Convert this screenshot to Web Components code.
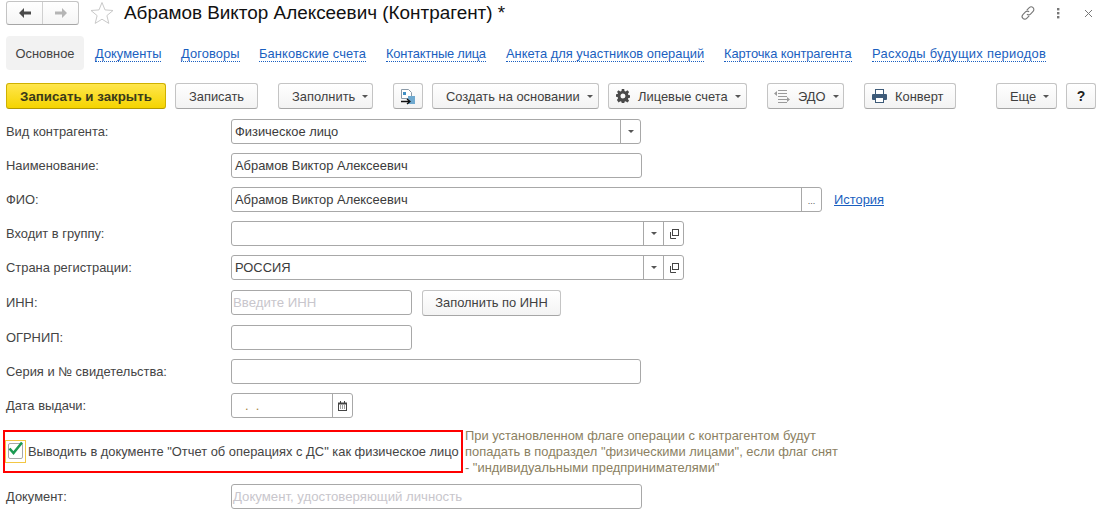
<!DOCTYPE html>
<html lang="ru">
<head>
<meta charset="utf-8">
<title>Контрагент</title>
<style>
  html, body { margin: 0; background: #fff; }
  body { font: 13px "Liberation Sans", Arial, sans-serif; color: #3b3b3b; width: 1112px; height: 515px; overflow: hidden; }
</style>
</head>
<body>
<contractor-form></contractor-form>

<script>
const ICONS = {
  back: `<svg width="14" height="12" viewBox="0 0 14 12"><path d="M6 1 1 6l5 5V7.500h7v-3H6z" fill="#4a4a4a"/></svg>`,
  forward: `<svg width="14" height="12" viewBox="0 0 14 12"><path d="M8 1l5 5-5 5V7.500H1v-3h7z" fill="#b5b5b5"/></svg>`,
  star: `<svg width="24" height="24" viewBox="0 0 24 24"><path d="M12 1.500l3 7.400 8 .6-6.100 5.100 1.900 7.800L12 18.200l-6.800 4.200 1.900-7.800L1 9.500l8-.6z" fill="#fff" stroke="#c9c9c9"/></svg>`,
  link: `<svg width="16" height="16" viewBox="0 0 16 16" fill="none" stroke="#777" stroke-width="1.100"><path d="M6.800 5.200 9.300 2.700a2.500 2.500 0 0 1 3.800 3.700l-2.600 2.700a2.500 2.500 0 0 1-3.600 0"/><path d="M9.200 10.800l-2.500 2.500a2.500 2.500 0 0 1-3.800-3.700l2.600-2.700a2.500 2.500 0 0 1 3.600 0"/></svg>`,
  dots: `<svg width="4" height="12" viewBox="0 0 4 12"><g fill="#777"><rect x="1" y="1" width="2.400" height="2.400"/><rect x="1" y="5" width="2.400" height="2.400"/><rect x="1" y="9" width="2.400" height="2.400"/></g></svg>`,
  close: `<svg width="9" height="9" viewBox="0 0 9 9"><path d="M1 1l7 7M8 1L1 8" stroke="#777" fill="none"/></svg>`,
  docgo: `<svg width="17" height="17" viewBox="0 0 17 17"><path d="M2.500 1.500h7l3 3v6h-10z" fill="#fff" stroke="#8a9aa8"/><rect x="4" y="4" width="3" height="3" fill="#3f8fc4"/><rect x="9" y="8" width="7" height="8" fill="#6fa9cf"/><path d="M2 13.500h8M8 11l3 2.500L8 16" stroke="#111" stroke-width="1.300" fill="none"/></svg>`,
  gear: `<svg width="14" height="14" viewBox="0 0 14 14"><path fill="#4a4a4a" fill-rule="evenodd" d="M5.800 0h2.400l.3 2 1.200.5L11.400 1.300l1.700 1.700-1.200 1.700.5 1.200 2 .3v2.400l-2 .3-.5 1.200 1.200 1.700-1.700 1.700-1.700-1.200-1.200.5-.3 2H5.800l-.3-2-1.200-.5-1.700 1.200L.9 11l1.200-1.700-.5-1.200-2-.3V5.400l2-.3.5-1.200L.9 3l1.700-1.700 1.700 1.200 1.200-.5zM7 4.500a2.500 2.500 0 1 0 0 5 2.500 2.500 0 0 0 0-5z"/></svg>`,
  edo: `<svg width="16" height="15" viewBox="0 0 16 15" fill="none" stroke="#9a9a9a"><path d="M4 1.500h9M4 4.500h9M4 7.500h9M4 10.500h9M4 13.500h9"/><path d="M0 4.500l3-2.500v5zM16 10.500l-3-2.500v5z" fill="#9a9a9a" stroke="none"/></svg>`,
  printer: `<svg width="15" height="14" viewBox="0 0 15 14"><rect x="3.500" y=".5" width="8" height="5" fill="#fff" stroke="#3d5a78"/><rect x="0" y="5" width="15" height="6" rx="1" fill="#3d5a78"/><rect x="3.500" y="8.500" width="8" height="5" fill="#fff" stroke="#3d5a78"/></svg>`,
  calendar: `<svg width="9" height="10" viewBox="0 0 9 10"><path d="M0 1.500h9V10H0z" fill="#444"/><rect x="1" y="3.500" width="7" height="5.500" fill="#fff"/><rect x="2" y="0" width="1" height="2" fill="#444"/><rect x="6" y="0" width="1" height="2" fill="#444"/><g fill="#444"><rect x="2" y="4.500" width="1" height="1"/><rect x="4" y="4.500" width="1" height="1"/><rect x="6" y="4.500" width="1" height="1"/><rect x="2" y="6.500" width="1" height="1"/><rect x="4" y="6.500" width="1" height="1"/><rect x="6" y="6.500" width="1" height="1"/></g></svg>`,
  open: `<svg width="10" height="10" viewBox="0 0 10 10" fill="none" stroke="#444"><rect x="3.500" y=".5" width="6" height="6"/><path d="M1.500 3v6.500H7" /></svg>`,
  check: `<svg width="17" height="15" viewBox="0 0 17 15"><path d="M2.500 7.500l4 4.500L15 1.500" fill="none" stroke="#1c9a52" stroke-width="2.600"/></svg>`
};

class TbButton extends HTMLElement {
  constructor() {
    super()
    const arrow = this.hasAttribute('arrow') ? `<i></i>` : '';
    const icon = this.getAttribute('icon');
    this.attachShadow({ mode: 'open' })
    this.shadowRoot.innerHTML = `
      <style>
        :host {
          display: flex;
          box-sizing: border-box;
          align-items: center;
          justify-content: center;
          gap: 7px;
          height: 26px;
          flex: none;
          border: 1px solid #c4c4c4;
          border-bottom-color: #a6a6a6;
          border-radius: 3px;
          background: linear-gradient(#fff, #f3f3f3);
          color: #3f3f3f;
          font-size: 12.900px;
          white-space: nowrap;
        }
        :host([pad]) { justify-content: flex-start; }
        :host([primary]) {
          background: linear-gradient(#ffe64d, #f5d400);
          border-color: #cfb100;
          border-bottom-color: #b39900;
          font-weight: bold;
          font-size: 13.300px;
          color: #3a3a1a;
        }
        svg { display: block; margin-right: 1px; }
        i { display: block; width: 0; height: 0; border: 3px solid transparent; border-top: 3px solid #555; border-bottom: 0; }
      </style>
      ${icon ? ICONS[icon] : ''}<slot></slot>${arrow}`
    if (this.hasAttribute('pad')) this.style.paddingLeft = this.getAttribute('pad') + 'px';
  }
}

class TextField extends HTMLElement {
  constructor() {
    super()
    const parts = (this.getAttribute('parts') || '').split(' ').filter(Boolean);
    const side = parts.map(p => `<b>${{
      drop: '<i></i>',
      open: ICONS.open,
      dots: '<span>...</span>',
      cal: ICONS.calendar
    }[p]}</b>`).join('');
    const value = this.getAttribute('value') || '';
    const hint = this.getAttribute('hint') || '';
    this.attachShadow({ mode: 'open' })
    this.shadowRoot.innerHTML = `
      <style>
        :host {
          display: flex;
          box-sizing: border-box;
          height: 25px;
          flex: none;
          border: 1px solid #a8a8a8;
          border-radius: 3px;
          background: #fff;
          font-size: 12.900px;
          color: #3b3b3b;
        }
        div { flex: 1; padding-left: 3px; line-height: 24px; white-space: nowrap; overflow: hidden; }
        div.hint { color: #c8c6cc; padding-left: 1px; font-size: 13.200px; }
        div.date { color: #a8823c; padding-left: 13px; }
        b { display: flex; width: 20px; box-sizing: border-box; border-left: 1px solid #a8a8a8; align-items: center; justify-content: center; font-weight: normal; }
        b span { font-size: 9px; color: #555; margin-top: 2px; }
        i { width: 0; height: 0; border: 3px solid transparent; border-top: 3px solid #555; border-bottom: 0; }
        svg { display: block; }
      </style>
      <div class="${hint ? 'hint' : ''} ${this.hasAttribute('date') ? 'date' : ''}">${value || hint}<slot></slot></div>${side}`
  }
}

class FormRow extends HTMLElement {
  constructor() {
    super()
    this.attachShadow({ mode: 'open' })
    this.shadowRoot.innerHTML = `
      <style>
        :host { display: flex; align-items: center; height: 25px; }
        label { width: 225px; flex: none; font-size: 12.900px; color: #444; }
        .rest { display: flex; align-items: center; gap: 10px; }
      </style>
      <label>${this.getAttribute('label')}</label>
      <div class="rest"><slot></slot></div>`
  }
}

class CheckRow extends HTMLElement {
  constructor() {
    super()
    this.attachShadow({ mode: 'open' })
    this.shadowRoot.innerHTML = `
      <style>
        :host { display: flex; align-items: stretch; height: 43px; margin-left: -3px; }
        .mark {
          display: flex; align-items: center; box-sizing: border-box; width: 460px; height: 43px; flex: none;
          border: 2px solid #f00; padding-left: 0; gap: 2px;
          font-size: 12.900px; color: #444; white-space: nowrap;
        }
        .box { display: block; position: relative; box-sizing: border-box; width: 21px; height: 23px; border: 1px solid #f3c744; padding: 2px 1px; }
        .box span { display: block; box-sizing: border-box; width: 15px; height: 16px; margin-left: 1px; border: 1px solid #a8a8a8; border-radius: 2px; }
        .box svg { position: absolute; left: 1px; top: 0; }
        .help { margin-left: 2px; font-size: 12.900px; line-height: 16px; color: #8b7f62; white-space: nowrap; margin-top: -2px; }
      </style>
      <div class="mark">
        <span class="box"><span></span>${ICONS.check}</span>
        <slot></slot>
      </div>
      <div class="help"><slot name="help"></slot></div>`
  }
}

class ContractorForm extends HTMLElement {
  constructor() {
    super()
    // text, gap before, width, letter spacing: the widths are read off the reference
    const tabs = [
      ['Документы', 11, 66, 0], ['Договоры', 20, 59, .1], ['Банковские счета', 19, 107, .12], ['Контактные лица', 20, 100, -.2],
      ['Анкета для участников операций', 20, 198, 0], ['Карточка контрагента', 20, 128, -.1], ['Расходы будущих периодов', 20, 174, .29]
    ];
    this.attachShadow({ mode: 'open' })
    this.shadowRoot.innerHTML = `
      <style>
        :host { display: block; padding: 1px 0 0 6px; }
        .head { display: flex; align-items: center; height: 24px; }
        .nav { display: flex; box-sizing: border-box; width: 73px; height: 24px; border: 1px solid #c4c4c4; border-bottom-color: #a6a6a6; border-radius: 3px; background: linear-gradient(#fff, #f5f5f5); }
        .nav span { flex: 1; display: flex; align-items: center; justify-content: center; }
        .nav span + span { border-left: 1px solid #d0d0d0; }
        .star { margin-left: 11px; display: flex; }
        h1 { margin: 0 0 0 10px; font-size: 18.900px; font-weight: normal; color: #111; white-space: nowrap; }
        .tools { margin-left: auto; margin-right: 16px; display: flex; align-items: center; gap: 14px; }
        .tools span { display: flex; width: 16px; justify-content: center; }
        .tabs { display: flex; align-items: center; height: 34px; margin-top: 11px; font-size: 12.900px; }
        .tabs .cur { display: flex; align-items: center; box-sizing: border-box; width: 78px; height: 34px; justify-content: center; background: #f2f2f2; border-radius: 4px; color: #444; }
        .tabs a { flex: none; color: #1a5fc0; text-decoration: none; border-bottom: 1px dotted #1a5fc0; line-height: 14px; padding-top: 2px; white-space: nowrap; }
        .bar { display: flex; margin-top: 13px; height: 26px; }
        .form { display: flex; flex-direction: column; gap: 9px; margin-top: 10px; }
        .hist { color: #1a5fc0; font-size: 12.900px; margin-left: 2px; text-decoration: underline; }
      </style>
      <div class="head">
        <div class="nav"><span>${ICONS.back}</span><span>${ICONS.forward}</span></div>
        <div class="star">${ICONS.star}</div>
        <h1>Абрамов Виктор Алексеевич (Контрагент) *</h1>
        <div class="tools"><span>${ICONS.link}</span><span>${ICONS.dots}</span><span>${ICONS.close}</span></div>
      </div>
      <div class="tabs">
        <span class="cur">Основное</span>
        ${tabs.map(t => `<a href="#" style="margin-left:${t[1]}px;width:${t[2]}px;letter-spacing:${t[3]}px">${t[0]}</a>`).join('')}
      </div>
      <div class="bar">
        <tb-button primary style="width:160px">Записать и закрыть</tb-button>
        <tb-button style="width:83px;margin-left:9px">Записать</tb-button>
        <tb-button arrow pad="13" style="width:95px;margin-left:20px">Заполнить</tb-button>
        <tb-button icon="docgo" style="width:30px;margin-left:20px"></tb-button>
        <tb-button arrow pad="13" style="width:167px;margin-left:9px">Создать на основании</tb-button>
        <tb-button arrow pad="7" icon="gear" style="width:139px;margin-left:9px">Лицевые счета</tb-button>
        <tb-button arrow pad="6" icon="edo" style="width:77px;margin-left:20px">ЭДО</tb-button>
        <tb-button pad="7" icon="printer" style="width:92px;margin-left:20px">Конверт</tb-button>
        <tb-button arrow pad="13" style="width:61px;margin-left:40px">Еще</tb-button>
        <tb-button style="width:30px;margin-left:9px;font-weight:bold;font-size:14px;color:#222">?</tb-button>
      </div>
      <div class="form">
        <form-row label="Вид контрагента:"><text-field parts="drop" value="Физическое лицо" style="width:410px"></text-field></form-row>
        <form-row label="Наименование:"><text-field value="Абрамов Виктор Алексеевич" style="width:411px"></text-field></form-row>
        <form-row label="ФИО:"><text-field parts="dots" value="Абрамов Виктор Алексеевич" style="width:591px"></text-field><a class="hist">История</a></form-row>
        <form-row label="Входит в группу:"><text-field parts="drop open" style="width:453px"></text-field></form-row>
        <form-row label="Страна регистрации:"><text-field parts="drop open" value="РОССИЯ" style="width:453px"></text-field></form-row>
        <form-row label="ИНН:" style="margin-top:1px"><text-field hint="Введите ИНН" style="width:181px"></text-field><tb-button style="width:139px">Заполнить по ИНН</tb-button></form-row>
        <form-row label="ОГРНИП:" style="margin-top:1px"><text-field style="width:181px"></text-field></form-row>
        <form-row label="Серия и № свидетельства:"><text-field style="width:410px"></text-field></form-row>
        <form-row label="Дата выдачи:"><text-field date parts="cal" value=".&nbsp;&nbsp;." style="width:122px"></text-field></form-row>
        <check-row style="margin-top:3px">
          Выводить в документе "Отчет об операциях с ДС" как физическое лицо
          <span slot="help">При установленном флаге операции с контрагентом будут<br>попадать в подраздел "физическими лицами", если флаг снят<br>- "индивидуальными предпринимателями"</span>
        </check-row>
        <form-row label="Документ:" style="margin-top:2px"><text-field hint="Документ, удостоверяющий личность" style="width:411px"></text-field></form-row>
      </div>`
  }
}

customElements.define('tb-button', TbButton)
customElements.define('text-field', TextField)
customElements.define('form-row', FormRow)
customElements.define('check-row', CheckRow)
customElements.define('contractor-form', ContractorForm)
</script>
</body>
</html>
